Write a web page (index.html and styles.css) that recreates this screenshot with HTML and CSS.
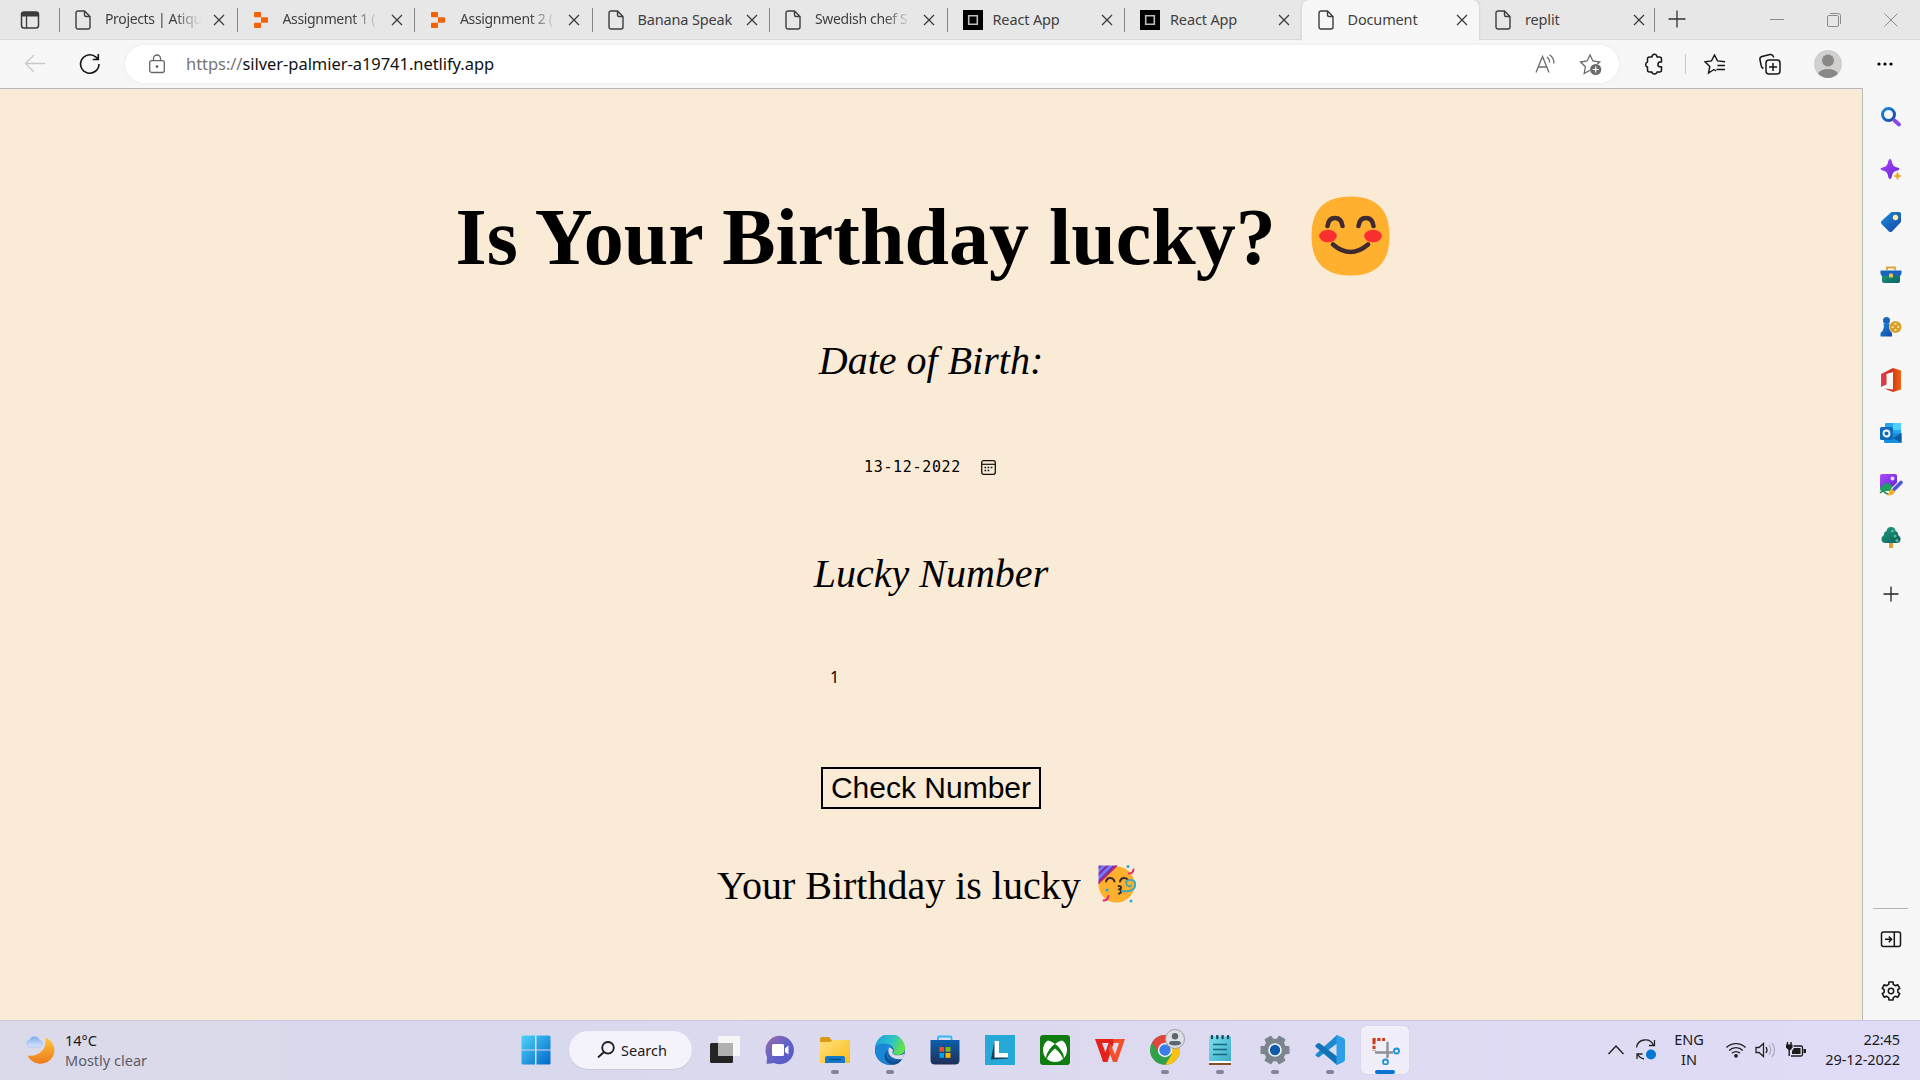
FILE: index.html
```html
<!DOCTYPE html>
<html lang="en">
<head>
<meta charset="utf-8">
<title>Document</title>
<link rel="stylesheet" href="styles.css">
</head>
<body>
<svg class="defs" width="0" height="0">
  <defs>
    <symbol id="doc" viewBox="0 0 16 20"><path d="M3 1h6.500L15 6.500V17a2 2 0 0 1-2 2H3a2 2 0 0 1-2-2V3a2 2 0 0 1 2-2zM9.500 1v4a1.500 1.500 0 0 0 1.500 1.500h4" fill="none" stroke="#3d3d3d" stroke-width="1.400"/></symbol>
    <symbol id="x" viewBox="0 0 12 12"><path d="M1 1l10 10M11 1L1 11" stroke="#3b3b3b" stroke-width="1.300" fill="none"/></symbol>
    <symbol id="replit" viewBox="0 0 14 16"><path d="M1 0h5q1 0 1 1v4.300H1q-1 0-1-1V1q0-1 1-1zM7 5.300h6q1 0 1 1v3.400q0 1-1 1H7zM1 10.700h6V15q0 1-1 1H1q-1 0-1-1v-3.300q0-1 1-1z" fill="#f26207"/></symbol>
    <symbol id="react" viewBox="0 0 20 20"><path d="M0 0h20v20H0z"/><path d="M5.700 5.700h8.600v8.600H5.700z" fill="none" stroke="#bdbdbd" stroke-width="1.600"/></symbol>
    <symbol id="gear" viewBox="0 0 24 24"><path d="M9.750 2.260h4.500l.22 2.550 2.520 1.450 2.320-1.080 2.250 3.900-2.100 1.470v2.900l2.100 1.470-2.250 3.900-2.320-1.080-2.520 1.450-.22 2.550h-4.500l-.22-2.550-2.520-1.450-2.320 1.080-2.250-3.900 2.100-1.470v-2.900l-2.100-1.470 2.250-3.900 2.320 1.080 2.520-1.450z" stroke-linejoin="round"/></symbol>
    <linearGradient id="gWin" x1="0" y1="0" x2="1" y2="1"><stop stop-color="#4fd3fb"/><stop offset="1" stop-color="#0067c8"/></linearGradient>
    <linearGradient id="gMoon" x1="0" y1="0" x2="0" y2="1"><stop stop-color="#ffc63a"/><stop offset="1" stop-color="#ee7a1c"/></linearGradient>
    <linearGradient id="gCloud" x1="0" y1="0" x2="0" y2="1"><stop stop-color="#7fa9ee"/><stop offset="1" stop-color="#d8e8fc"/></linearGradient>
    <linearGradient id="gBlue" x1="0" y1="0" x2="1" y2="1"><stop stop-color="#1b8bd8"/><stop offset="1" stop-color="#1746a8"/></linearGradient>
    <linearGradient id="gPurple" x1="0" y1="0" x2="1" y2="1"><stop stop-color="#b14cff"/><stop offset="1" stop-color="#5b1fd1"/></linearGradient>
    <linearGradient id="gChat" x1="0" y1="0" x2="1" y2="1"><stop stop-color="#a06aa8"/><stop offset=".5" stop-color="#6264c7"/><stop offset="1" stop-color="#5456c9"/></linearGradient>
    <linearGradient id="gFolder" x1="0" y1="0" x2="1" y2="1"><stop stop-color="#ffe07a"/><stop offset="1" stop-color="#fbbc1c"/></linearGradient>
    <linearGradient id="gEdge" x1="0" y1="0" x2="1" y2=".3"><stop stop-color="#1c9fe0"/><stop offset=".6" stop-color="#2cc3c9"/><stop offset="1" stop-color="#62e04d"/></linearGradient>
    <linearGradient id="gStore" x1="0" y1="0" x2="0" y2="1"><stop stop-color="#0c5fae"/><stop offset="1" stop-color="#1e2f55"/></linearGradient>
    <linearGradient id="gOffice" x1="0" y1="0" x2="1" y2="0"><stop stop-color="#e0405a"/><stop offset=".5" stop-color="#d0301c"/><stop offset="1" stop-color="#f0620f"/></linearGradient>
    <linearGradient id="gGreen" x1="0" y1="0" x2="1" y2="1"><stop stop-color="#1f9e78"/><stop offset="1" stop-color="#0d5e63"/></linearGradient>
    <linearGradient id="gPad" x1="0" y1="0" x2="1" y2="1"><stop stop-color="#7fe0ee"/><stop offset="1" stop-color="#35a9c4"/></linearGradient>
    <linearGradient id="gHat" x1="0" y1="0" x2="3.500" y2="3.500" gradientUnits="userSpaceOnUse" spreadMethod="repeat"><stop stop-color="#6d7bff"/><stop offset=".5" stop-color="#6d7bff"/><stop offset=".5" stop-color="#8b2f9e"/><stop offset="1" stop-color="#8b2f9e"/></linearGradient>
  </defs>
</svg>

<header class="tabstrip">
  <span class="tab-actions"><svg width="20" height="18" viewBox="0 0 20 18"><rect x="1.500" y="1" width="17" height="16" rx="2.500" fill="none" stroke="#3b3b3b" stroke-width="1.500"/><path d="M2 1h16v4.500H2z" fill="#3b3b3b"/><path d="M6.500 5v12" stroke="#3b3b3b" stroke-width="1.300"/></svg></span>
  <div class="tab"><svg class="fav doc"><use href="#doc"/></svg><span class="label">Projects | Atiqu</span><svg class="close"><use href="#x"/></svg></div>
  <div class="tab"><svg class="fav orange"><use href="#replit"/></svg><span class="label">Assignment 1 (</span><svg class="close"><use href="#x"/></svg></div>
  <div class="tab"><svg class="fav orange"><use href="#replit"/></svg><span class="label">Assignment 2 (</span><svg class="close"><use href="#x"/></svg></div>
  <div class="tab"><svg class="fav doc"><use href="#doc"/></svg><span class="label full">Banana Speak</span><svg class="close"><use href="#x"/></svg></div>
  <div class="tab"><svg class="fav doc"><use href="#doc"/></svg><span class="label">Swedish chef S</span><svg class="close"><use href="#x"/></svg></div>
  <div class="tab"><svg class="fav react"><use href="#react"/></svg><span class="label full">React App</span><svg class="close"><use href="#x"/></svg></div>
  <div class="tab"><svg class="fav react"><use href="#react"/></svg><span class="label full">React App</span><svg class="close"><use href="#x"/></svg></div>
  <div class="tab active"><svg class="fav doc"><use href="#doc"/></svg><span class="label full">Document</span><svg class="close"><use href="#x"/></svg></div>
  <div class="tab last"><svg class="fav doc"><use href="#doc"/></svg><span class="label full">replit</span><svg class="close"><use href="#x"/></svg></div>
  <span class="new-tab"><svg width="18" height="18" viewBox="0 0 18 18"><path d="M9 .5v17M.5 9h17" stroke="#333" stroke-width="1.300"/></svg></span>
  <div class="window-buttons">
    <svg width="14" height="14" viewBox="0 0 14 14"><path d="M0 6.500h14" stroke="#8c8c8c"/></svg>
    <svg width="14" height="14" viewBox="0 0 14 14" fill="none" stroke="#8c8c8c"><rect x=".5" y="2.500" width="11" height="11" rx="1.500"/><path d="M3 .5h8.500a2 2 0 0 1 2 2V11"/></svg>
    <svg width="14" height="14" viewBox="0 0 14 14"><path d="M.5.5l13 13M13.500.5l-13 13" stroke="#8c8c8c"/></svg>
  </div>
</header>

<div class="toolbar">
  <span class="slot"><svg width="22" height="20" viewBox="0 0 22 20" fill="none" stroke="#c9c9c9" stroke-width="1.300"><path d="M21 9.500H1.500M10 1L1.500 9.500 10 18"/></svg></span>
  <span class="slot"><svg width="22" height="22" viewBox="0 0 22 22" fill="none" stroke="#161616" stroke-width="1.600"><path d="M20 11a9.200 9.200 0 1 1-3-6.800l2 2M19.300 1v5.500h-5.500"/></svg></span>
  <div class="address">
    <svg width="16" height="20" viewBox="0 0 16 20" fill="none" stroke="#666" stroke-width="1.300"><rect x=".7" y="6.700" width="14.600" height="11.800" rx="2"/><path d="M4.500 6.500V4.500a3.500 3.500 0 0 1 7 0v2"/><circle cx="8" cy="12.600" r=".8" fill="#666"/></svg>
    <span class="url"><span class="scheme">https://</span>silver-palmier-a19741.netlify.app</span>
    <svg class="read" width="22" height="20" viewBox="0 0 22 20" fill="none" stroke="#6b6b6b" stroke-width="1.300"><path d="M1 18.500L7.500 2.500 14 18.500M3.300 13h8.400M12 3c1.800 1.300 2.600 3 2.600 5.500M14.500.8c3.200 2.200 4.800 5 4.300 8.700"/></svg>
    <svg width="23" height="23" viewBox="0 0 23 23"><path d="M11 17.200l-5.800 3.300 1.200-6.700L1.500 9l6.600-1L11 2l2.900 6 6.800 1-2.500 2.300" fill="none" stroke="#6b6b6b" stroke-width="1.300"/><circle cx="16.700" cy="16.500" r="5.600" fill="#6b6b6b"/><path d="M16.700 13.500v6M13.700 16.500h6" stroke="#fff" stroke-width="1.200"/></svg>
  </div>
  <span class="slot"></span>
  <span class="slot"><svg width="20" height="22" viewBox="0 0 20 22" fill="none" stroke="#161616" stroke-width="1.500" stroke-linejoin="round"><path d="M5.500 4H8a2.500 2.800 0 0 1 5 0h2.500q2 0 2 2v3H16a2 2.400 0 0 0 0 4.800h1.500V17q0 2-2 2H13a2.500 2 0 0 1-5 0H5.500q-2 0-2-2v-3a2.500 2.600 0 0 1 0-5V6q0-2 2-2z"/></svg></span>
  <span class="slot"><i class="divider"></i></span>
  <span class="slot"><svg width="22" height="21" viewBox="0 0 22 21" fill="none" stroke="#161616" stroke-width="1.400"><path d="M10 15.500l-5.500 3.500 1.300-6.500L1 7.800l6.500-.9L10.500 1l3 5.900 7.500.9M13.500 11.500h7.500M12.500 15.500H21M10 15.500l2 1.500"/></svg></span>
  <span class="slot"><svg width="22" height="22" viewBox="0 0 22 22" fill="none" stroke="#161616" stroke-width="1.500"><rect x="7" y="7" width="14" height="14" rx="3"/><path d="M14 10v8M10 14h8M4.500 15.500Q2.800 15 2.300 13L.9 6.500Q.5 4 3 3.400L11 1.500q2.500-.5 3.400 2l.3 1"/></svg></span>
  <span class="slot"><svg width="28" height="28" viewBox="0 0 28 28"><circle cx="14" cy="14" r="14" fill="#d2d0ce"/><circle cx="14" cy="10.500" r="6" fill="#8a8886"/><path d="M4 23.800a10.500 7 0 0 1 20 0A14 14 0 0 1 4 23.800z" fill="#8a8886"/></svg></span>
  <span class="slot"><svg width="18" height="6" viewBox="0 0 18 6"><circle cx="3" cy="3" r="1.600"/><circle cx="9" cy="3" r="1.600"/><circle cx="15" cy="3" r="1.600"/></svg></span>
</div>

<div class="browser-body">
  <main class="page">
    <h1 class="title"><span>Is Your Birthday lucky?</span>
      <svg width="80" height="80" viewBox="0 0 80 80"><path d="M39.500.5C66 .5 78.500 14 78.500 40S66 79.500 39.500 79.500.5 66 .5 40 13 .5 39.500.5z" fill="#ffb02e"/><ellipse cx="17" cy="40" rx="8.800" ry="6.300" fill="#f92f30"/><ellipse cx="62" cy="40" rx="8.800" ry="6.300" fill="#f92f30"/><path d="M16.500 30q1-8 7.500-8t7.500 8M47.500 30q1-8 7.500-8t7.500 8M22 48.500q17.500 15 35 0" fill="none" stroke="#402a32" stroke-width="4.500" stroke-linecap="round"/></svg>
    </h1>
    <p class="caption birth">Date of Birth:</p>
    <div class="date-field"><span>13-12-2022</span><svg width="15" height="15" viewBox="0 0 15 15" fill="none" stroke="#111"><rect x=".7" y=".7" width="13.600" height="13.600" rx="2" stroke-width="1.300"/><path d="M1 4.300h13" stroke-width="1.200"/><path d="M3.500 7.500h8M3.500 10.500h5.500" stroke-width="1.500" stroke-dasharray="1.700 1.400"/></svg></div>
    <p class="caption number">Lucky Number</p>
    <div class="number-field">1</div>
    <button class="check">Check Number</button>
    <p class="result"><span>Your Birthday is lucky</span>
      <svg width="40" height="40" viewBox="0 0 40 40"><circle cx="19.500" cy="20.500" r="18" fill="#ffb02e"/><path d="M2 1.500h18L1.500 19.500V2z" fill="url(#gHat)"/><path d="M20 1.500L1.500 19.500" stroke="#b8257a" stroke-width="1.500"/><path d="M9 17.500q1-4 4.500-3.500t4 3.500M23 17.500q1-4 4.500-3.500 2 0 3 1.500M21.500 22q3 0 2.500 2.300l-1.500 1q2 1 1.500 3l-2 1.500" fill="none" stroke="#402a32" stroke-width="2" stroke-linecap="round"/><path d="M24 27q13 1.500 14-5t-5-6-3 5q3 3 4.500 0" fill="none" stroke="#3faab8" stroke-width="2"/><path d="M32 9.500q4 0 4.500-4M6.500 36.500q4 0 5-4.500" fill="none" stroke="#f3216d" stroke-width="2" stroke-linecap="round"/><g fill="#26a6dc"><circle cx="31" cy="2.500" r="1.500"/><circle cx="34" cy="37" r="1.500"/><circle cx="10" cy="26" r="1.500"/></g></svg>
    </p>
  </main>
  <aside class="sidebar">
    <div class="apps">
      <svg viewBox="0 0 22 22"><circle cx="8.500" cy="8.500" r="6" fill="none" stroke="url(#gBlue)" stroke-width="3"/><path d="M14.500 14.500l4.500 4" stroke="#8a46e8" stroke-width="3.800" stroke-linecap="round"/></svg>
      <svg viewBox="0 0 22 22"><path d="M10 0q1.500 0 2 3.500 1 4 4.500 4.800 3 .7 3 1.700t-3 1.700q-3.500.8-4.500 4.800-.5 3.500-2 3.500t-2-3.500q-1-4-4.500-4.800Q.5 11 .5 10t3-1.700Q7 7.500 8 3.500 8.500 0 10 0z" fill="url(#gPurple)"/><path d="M17.500 12.500l1.400 3.300 3.100 1.200-3.100 1.300-1.400 3.200-1.400-3.200L13 17l3.100-1.200z" fill="#e5ab25"/></svg>
      <svg viewBox="0 0 22 22"><path d="M11.500 1H19q2 0 2 2v8l-9 9.500q-1.500 1-3 0L1.500 13q-1.200-1.500 0-3z" fill="url(#gBlue)"/><circle cx="15.500" cy="6.500" r="2.700" fill="#fff0a0"/></svg>
      <svg viewBox="0 0 22 22"><path d="M7 6V3.500h8V6" fill="none" stroke="#d9a63a" stroke-width="1.800"/><path d="M2 9h18v8q0 2-2 2H4q-2 0-2-2z" fill="url(#gGreen)"/><path d="M.5 6.500h21V9q0 3-3 3h-15q-3 0-3-3z" fill="#1763bd"/><rect x="9" y="9.500" width="4" height="4" rx="1" fill="#f3c64a"/></svg>
      <svg viewBox="0 0 22 22"><circle cx="6.500" cy="4.500" r="3.500" fill="#1b66b8"/><path d="M3.500 7.500h6v2H9q0 5 3 7.500v3.500H.5V17q3-2 3.500-7.500h-.5z" fill="url(#gBlue)"/><circle cx="15.500" cy="11" r="6" fill="#dba02c"/><g fill="#fff0a8"><circle cx="15.500" cy="8" r="1"/><circle cx="12.700" cy="11" r="1"/><circle cx="18.300" cy="11" r="1"/><circle cx="15.500" cy="14" r="1"/></g></svg>
      <svg class="tall" viewBox="0 0 22 24"><path d="M13 0l8 2.500v19L13 24 4 20.500l9 1V4L6.500 6v10.500L1 19V6z" fill="url(#gOffice)"/></svg>
      <svg viewBox="0 0 22 22"><path d="M6 1h14q1 0 1 1v9H5V2q0-1 1-1z" fill="#28a8ea"/><path d="M13 1h8v7h-8z" fill="#50d0ff"/><path d="M4 11h17.500v9q0 1-1 1H5q-1 0-1-1z" fill="#1490df"/><path d="M21.500 11L13 16l8.500 5z" fill="#0a5ea8"/><rect x="0" y="5" width="13" height="13" rx="1.500" fill="#0f6cbd"/><circle cx="6.500" cy="11.500" r="3" fill="none" stroke="#fff" stroke-width="1.800"/></svg>
      <svg class="wide" viewBox="0 0 24 24"><rect x="1" y="1" width="17" height="16" rx="2" fill="url(#gPurple)"/><circle cx="13.500" cy="5.500" r="2" fill="#e9d7ff"/><path d="M1 15l4-4q3-2 6 0l4 4q0 3-2 3H3q-2 0-2-2z" fill="#20a060"/><path d="M1 20q3-3 4.500-1t4 2" stroke="#20855a" stroke-width="1.600" fill="none"/><path d="M22 9.500l-7 7" stroke="#f7f7f7" stroke-width="5.500" stroke-linecap="round"/><path d="M22 9.500l-7 7" stroke="#4d55d9" stroke-width="3.600" stroke-linecap="round"/><path d="M13 16l3 3q-2 4-8 3.500 2.500-2 2.500-4.500 1-2 2.500-2z" fill="#f0ae23"/></svg>
      <svg viewBox="0 0 22 22"><path d="M9 15h4v6H9z" fill="#d8a13a"/><path d="M11 0q4 0 4.500 4 3 1 2.500 4 3 2 2.500 5t-4 3H5.500q-3.500 0-4-3T4 8q-.5-3 2.500-4Q7 0 11 0z" fill="url(#gGreen)"/><g fill="#55bf88"><circle cx="12.500" cy="4" r="1.500"/><circle cx="15" cy="9" r="1.500"/><circle cx="17" cy="13.500" r="1.500"/></g></svg>
      <svg class="add" viewBox="0 0 22 22"><path d="M11 3.500v15M3.500 11h15" stroke="#222" stroke-width="1.300"/></svg>
    </div>
    <div class="tools">
      <svg viewBox="0 0 22 22" fill="none" stroke="#161616" stroke-width="1.500"><rect x="1.500" y="4" width="19" height="14.500" rx="2"/><path d="M14.300 4v14.500M5 11.300h6.500M8.800 8.500l2.800 2.800-2.800 2.800"/></svg>
      <svg viewBox="0 0 22 22"><use href="#gear" fill="none" stroke="#161616" stroke-width="1.700"/><circle cx="11" cy="11" r="2.700" fill="none" stroke="#161616" stroke-width="1.500"/></svg>
    </div>
  </aside>
</div>

<footer class="taskbar">
  <div class="weather">
    <svg width="30" height="30" viewBox="0 0 30 30"><path d="M20 2.500a14 13.500 0 1 1-17.500 18Q11 22 17 16q5-6 3-13.500z" fill="url(#gMoon)"/><path d="M4.500 12a4 4 0 0 1 0-7.500 5.500 5.500 0 0 1 10 .5 3.800 3.800 0 0 1 1 7z" fill="url(#gCloud)" stroke="#9fbdf0" stroke-width=".6"/></svg>
    <div class="weather-text"><span>14°C</span><span class="muted">Mostly clear</span></div>
  </div>
  <div class="dock">
    <span class="app"><svg viewBox="0 0 30 30"><path d="M.5 2q0-1.500 1.500-1.500h12v14H.5zM15.500.5H28q1.500 0 1.500 1.500v12.500h-14zM.5 15.500h13.500v14H2Q.5 29.500.5 28zM15.500 15.500h14V28q0 1.500-1.500 1.500H15.500z" fill="url(#gWin)"/></svg></span>
    <div class="search"><svg width="18" height="17" viewBox="0 0 18 17" fill="none" stroke="#1b1b1b" stroke-width="1.800"><circle cx="11" cy="6.800" r="5.800"/><path d="M7 11L1 16.500"/></svg><span>Search</span></div>
    <span class="app"><svg viewBox="0 0 30 30"><rect y="8" width="23" height="20" rx="1.500" fill="#252525"/><rect x="8" y="1" width="22" height="20" rx="1.500" fill="#f8f8f8" opacity=".9"/><path d="M8 8h15v13H8z" fill="#b0b0b0"/></svg></span>
    <span class="app"><svg viewBox="0 0 30 30"><path d="M15 .8A14.200 14.200 0 1 1 9 28q-4 1-7.500.8Q2 26 2 22 .5 19 .5 15A14.300 14.300 0 0 1 15 .8z" fill="url(#gChat)"/><rect x="7" y="9" width="12" height="12" rx="1.500" fill="#fff"/><path d="M20 13.500l3.500-3v9L20 17z" fill="#fff"/></svg></span>
    <span class="app run"><svg viewBox="0 0 30 30"><path d="M0 3.500Q0 2 1.500 2H9l3.500 4-2 2H0z" fill="#d99a18"/><path d="M0 7h10.500l2-2H30v23H0z" fill="url(#gFolder)"/><path d="M5 28v-5q0-2 2-2h16q2 0 2 2v5z" fill="#1379c8"/><path d="M9 24.500h12" stroke="#0b4d91" stroke-width="1.500"/></svg></span>
    <span class="app run"><svg viewBox="0 0 30 30"><circle cx="15" cy="15" r="15" fill="#1161ad"/><path d="M0 14A15 15 0 0 1 30 13.500q0 6.500-7 6.500-5 0-5.500-2.500 2-1 .8-4Q16 9 9.500 9.500 2 10 0 14z" fill="url(#gEdge)"/><path d="M0 15q0-6.500 8-6.500t10 4q-6 0-6 6.500 1 7 9 8.500-4 3-9 2.200Q0 26 0 15z" fill="#1a86d6"/><path d="M12.500 15q-3.500 7 3 10.500 6 2.500 12-2.300-3 6.600-10 6.600-8-2-8-9 .5-4 3-5.800z" fill="#0f4d92"/><path d="M14 12.500q3.500.5 4 3 0 1-.8 2 .8 3 6 2.800 3.200 0 6-1.600-.8 3.600-1.500 5-6 1.500-11-1.500-5-4-2.700-9.700z" fill="#dbd9ee"/></svg></span>
    <span class="app"><svg viewBox="0 0 30 30"><path d="M8 8V2.500q0-1 1-1h11.500q1 0 1 1V8" fill="none" stroke="#35b5f2" stroke-width="1.800"/><path d="M.5 5h29v20q0 4.500-4.500 4.500H5Q.5 29.500.5 25z" fill="url(#gStore)"/><path d="M9.500 12H14v4.700H9.500z" fill="#f25022"/><path d="M15.500 12h5v4.700h-5z" fill="#7fba00"/><path d="M9.500 18H14v4.800H9.500z" fill="#00a4ef"/><path d="M15.500 18h5v4.800h-5z" fill="#ffb900"/></svg></span>
    <span class="app"><svg viewBox="0 0 30 30"><path d="M0 0h30v30H0z" fill="#27a9d8"/><path d="M9.500 6L6 24.500 11 22z" fill="#123a5c"/><path d="M6 24.500l17-1V22H9z" fill="#123a5c"/><path d="M9.500 6h4.500v12h9v4.500H9.500z" fill="#fff"/></svg></span>
    <span class="app"><svg viewBox="0 0 30 30"><rect width="30" height="30" rx="3" fill="#107c10"/><circle cx="15" cy="15" r="12" fill="#fff"/><path d="M7 5.500Q10 5 15 9q5-4 8-3.500Q19 2 15 2T7 5.500zM15 9q-3 1.500-6.500 7Q5 21.500 6.500 25q2-6.500 8.500-11.500 6.500 5 8.500 11.500Q25 21.500 21.500 16 18 10.500 15 9z" fill="#107c10"/></svg></span>
    <span class="app"><svg viewBox="0 0 30 30"><path d="M0 4h17l-2 4H7l4.500 12-1.500 6.500H8z" fill="#e3231b"/><path d="M5 8l4.500 12L15 4h5l-7.500 23H8z" fill="#e3231b"/><path d="M18 4h12l-8 23h-4L13.500 15l2.200-6L20 19.500 24 8h-5z" fill="#f5502c"/></svg></span>
    <span class="app run"><svg viewBox="0 0 30 30"><circle cx="15" cy="15" r="15" fill="#31a04b"/><path d="M15 0A15 15 0 0 1 28 7.500H15L9 18 2 7.500A15 15 0 0 1 15 0z" fill="#e0443a"/><path d="M15 7.500h13A15 15 0 0 1 15 30l7-11z" fill="#fbc116"/><circle cx="15" cy="15" r="7.200" fill="#f4f4f4"/><circle cx="15" cy="15" r="5.700" fill="#3b7de9"/></svg><svg class="badge" viewBox="0 0 20 20"><circle cx="10" cy="10" r="9.500" fill="#dcdfe3" stroke="#9a9fa5"/><circle cx="10" cy="7.200" r="3.200" fill="#5a6670"/><path d="M4 15q0-3 3-3h6q3 0 3 3-6 3-12 0z" fill="#5a6670"/></svg></span>
    <span class="app run"><svg viewBox="0 0 30 30"><path d="M4 1.500h22v27H4z" fill="url(#gPad)"/><path d="M4 26h22v2H4z" fill="#fff"/><path d="M4 28h22v2H4z" fill="#855028"/><path d="M8 9.500h14M8 14.500h14M8 19.500h14" stroke="#14687f" stroke-width="1.600"/><path d="M7 1v2M12.300 1v2M17.600 1v2M23 1v2" stroke="#1c4e63" stroke-width="2.400" stroke-linecap="round"/></svg></span>
    <span class="app run"><svg viewBox="0 0 30 30"><g transform="rotate(30 15 15)"><use href="#gear" x="-2" y="-2" width="34" height="34" fill="#7b858d" stroke="#7b858d" stroke-width="1"/></g><circle cx="15" cy="15" r="6" fill="#0e59a8" stroke="#eef3f8" stroke-width="1.700"/></svg></span>
    <span class="app run"><svg viewBox="0 0 30 30"><path d="M22 0L2.500 17.500Q-.5 20 1 21l2.500 1.500L24 7z" fill="#1d8ad0"/><path d="M2.500 8.500L.8 10q-1 1 0 2L22 30l2-7L5 8.500q-1-.8-2.500 0z" fill="#1272b8"/><path d="M22 0l6.500 3q1.500.8 1.500 2.500v19q0 1.700-1.500 2.500L22 30q-1.500 0-.5-2V2q-1-2 .5-2z" fill="#2c9fe6"/></svg></span>
    <span class="app run current"><svg viewBox="0 0 30 30"><path d="M2.500 4.500H15M4 6v10" fill="none" stroke="#d23c14" stroke-width="3" stroke-dasharray="3.200 1.600"/><path d="M17.500 7v16M5 17.500h18" stroke="#8c9196" stroke-width="2.400"/><circle cx="26.500" cy="16" r="2.500" fill="none" stroke="#1c93dc" stroke-width="1.800"/><circle cx="15.500" cy="27" r="2.500" fill="none" stroke="#1c93dc" stroke-width="1.800"/></svg></span>
  </div>
  <div class="tray">
    <svg width="16" height="10" viewBox="0 0 16 10" fill="none" stroke="#222" stroke-width="1.400"><path d="M.5 9L8 1l7.500 8"/></svg>
    <svg class="sync" width="20" height="21" viewBox="0 0 20 21"><path d="M.5 8.500A9 9 0 0 1 17.500 6M18.500 1v5.500H13M8 20q-4.500-1-6.500-5M1 20v-5h5.500" fill="none" stroke="#222" stroke-width="1.300"/><circle cx="15" cy="15.500" r="5" fill="#0078d4"/></svg>
    <span class="lang">ENG<br>IN</span>
    <svg class="wifi" width="20" height="16" viewBox="0 0 20 16" fill="none" stroke="#222" stroke-width="1.400"><path d="M.5 5.500a13.500 13.500 0 0 1 19 0M3.200 8.500a9.500 9.500 0 0 1 13.600 0M6 11.300a5.600 5.600 0 0 1 8 0"/><circle cx="10" cy="13.800" r="1.200" fill="#222"/></svg>
    <svg class="volume" width="21" height="16" viewBox="0 0 21 16" fill="none" stroke="#222" stroke-width="1.300"><path d="M1 5.500h3L8.500 1.500v13L4 10.500H1zM11 5q2 3 0 6"/><path d="M14 3q3.500 5 0 10M17 1q5 7 0 14" stroke="#aeadc0"/></svg>
    <svg class="battery" width="20" height="16" viewBox="0 0 20 16"><path d="M1.500 0v3M5 0v3M3.200 7v7" fill="none" stroke="#1b1b1b" stroke-width="1.400"/><path d="M0 2.500h6.500v3L4.500 8h-2L0 5.500z" fill="#1b1b1b"/><path d="M7.500 4H15q1.500 0 1.500 1.500v7Q16.500 14 15 14H5" fill="none" stroke="#1b1b1b" stroke-width="1.300"/><path d="M8 6h6.500v6H6V9zM17.500 7H20v4h-2.500z" fill="#1b1b1b"/></svg>
    <span class="clock">22:45<br>29-12-2022</span>
  </div>
</footer>
</body>
</html>
```
FILE: styles.css
```css
* { box-sizing: border-box; }
body {
  margin: 0;
  width: 1920px;
  height: 1080px;
  overflow: hidden;
  display: flex;
  flex-direction: column;
  font-family: "Noto Sans", "Open Sans", sans-serif;
  color: #111;
}
svg { display: block; flex: none; }
p, h1 { margin: 0; }
.defs { position: absolute; }

/* Tab strip */
.tabstrip { display: flex; height: 40px; flex: none; background: #e7e7e7; border-bottom: 1px solid #d9d9d9; }
.tab-actions { width: 59px; padding: 11px 0 0 20px; }
.tab { display: flex; align-items: center; width: 177.5px; flex: none; padding-left: 16px; position: relative; font-size: 14.5px; color: #3f3f3f; }
.tab::before { content: ""; position: absolute; left: 0; top: 8px; width: 1px; height: 24px; background: #858585; }
.tab.active::before, .tab.last::before { display: none; }
.tab.last::after { content: ""; position: absolute; right: 2px; top: 8px; width: 1px; height: 24px; background: #858585; }
.tab.active { background: #f7f7f7; height: 41px; border-radius: 7px 7px 0 0; box-shadow: 0 0 3px #c4c4c4; clip-path: inset(-3px -3px 0 -3px); padding-bottom: 2px; }
.fav { width: 20px; height: 20px; margin-right: 10px; }
.fav.doc { width: 16px; margin-right: 14px; }
.fav.orange { width: 14px; height: 16px; margin: 0 15px 0 1px; }
.label { width: 96px; margin-top: -2px; white-space: nowrap; font-size: 14px; letter-spacing: -.35px; -webkit-mask-image: linear-gradient(90deg, #000 72%, transparent 100%); mask-image: linear-gradient(90deg, #000 72%, transparent 100%); }
.label.full { font-size: 14.5px; letter-spacing: -.15px; -webkit-mask-image: none; mask-image: none; }
.close { width: 12px; height: 12px; margin: 1px 0 0 12px; }
.new-tab { padding: 10px 0 0 11px; }
.window-buttons { display: flex; gap: 43px; margin: 13px 22px 0 auto; }

/* Toolbar */
.toolbar { display: grid; grid-template-columns: 70px 55px 1494px 10px 50px 12px 48px 62px 54px 60px; align-items: center; height: 48px; flex: none; background: #f7f7f7; }
.slot { display: flex; justify-content: center; }
.slot:nth-child(2) { padding-right: 15px; }
.divider { width: 1px; height: 20px; background: #c8c8c8; }
.address { display: flex; align-items: center; height: 38px; padding: 0 17px 0 24px; border-radius: 19px; background: #fff; box-shadow: 0 0 3px #e2e2e2; }
.url { margin: -1px 0 0 21px; font-size: 16.5px; letter-spacing: -.05px; white-space: nowrap; }
.scheme { color: #767676; }
.read { margin: 0 22px 0 auto; }

/* Page and sidebar */
.browser-body { display: flex; height: 932px; flex: none; background: #f7f7f7; }
.page { width: 1863px; border-top: 1px solid #b9b9b9; border-right: 1px solid #b9b9b9; background: #faebd7; display: flex; flex-direction: column; align-items: center; font-family: "Liberation Serif", serif; color: #000; }
.title { display: flex; gap: 39px; margin: 102px 2px 0 0; width: 949px; font-size: 80px; line-height: 92px; white-space: nowrap; }
.title span { width: 816px; }
.title svg { margin-top: 5px; }
.caption { font-size: 40px; line-height: 46px; font-style: italic; }
.birth { margin-top: 55px; }
.date-field { display: flex; align-items: center; gap: 20px; height: 20px; margin: 73px 2px 0 0; font: 15px/20px "DejaVu Sans Mono", monospace; letter-spacing: .67px; }
.number { margin-top: 74px; }
.number-field { width: 202px; height: 20px; margin-top: 70px; font: 16px/20px "Noto Sans", sans-serif; }
.check { height: 42px; width: 220px; margin: 80px 0 0; padding: 0; border: 2px solid #000; background: none; color: #000; font: 30px/36px "Liberation Sans", sans-serif; white-space: nowrap; }
.result { display: flex; gap: 16px; margin-top: 54px; width: 428px; font-size: 40px; line-height: 46px; white-space: nowrap; }
.result svg { margin-top: 1px; }
.sidebar { width: 57px; display: flex; flex-direction: column; justify-content: space-between; align-items: center; padding: 18px 2px 18px 0; }
.apps { display: flex; flex-direction: column; align-items: center; gap: 30.6px; }
.apps svg { width: 22px; height: 22px; }
.apps .tall { height: 24px; margin: -1px 0; }
.apps .wide { width: 24px; height: 24px; margin: -1px 0; }
.apps .add { margin-top: 4px; }
.tools { width: 35px; border-top: 1px solid #b5b5b5; display: flex; flex-direction: column; align-items: center; gap: 30px; padding-top: 19px; }
.tools svg { width: 22px; height: 22px; }

/* Taskbar */
.taskbar { display: flex; height: 60px; flex: none; background: linear-gradient(90deg, #dbdaea, #d9d9ed 30%, #dddaf0 60%, #e0dcf8); border-top: 1px solid #cfc6dd; font-size: 14.5px; color: #1b1b1b; }
.weather { display: flex; width: 508px; padding: 14px 0 0 25px; gap: 10px; }
.weather-text { display: flex; flex-direction: column; line-height: 20px; margin-top: -5px; }
.muted { color: #5c5c66; }
.dock { display: flex; align-items: center; height: 57px; }
.app { display: flex; justify-content: center; align-items: center; width: 55px; height: 48px; position: relative; }
.app > svg { width: 30px; height: 30px; }
.app > .badge { position: absolute; right: 7px; top: 3px; width: 20px; height: 20px; }
.run::after { content: ""; position: absolute; bottom: 0; width: 8px; height: 4px; border-radius: 2px; background: #85839a; }
.current { width: 48px; margin-left: 3.5px; border-radius: 5px; background: #efeef9; box-shadow: 0 0 1px #b9b6cc; }
.current::after { width: 20px; background: #0a74d0; }
.search { display: flex; align-items: center; gap: 6px; width: 123px; height: 38px; margin: 0 5px 0 6px; padding-left: 28px; border-radius: 19px; background: #f4f3fb; box-shadow: 0 1px 1px #c9c7da; }
.tray { display: flex; align-items: center; margin-left: auto; padding-right: 20px; height: 57px; line-height: 20px; }
.sync { margin-left: 12px; }
.lang { width: 30px; margin: -2px 0 0 18px; text-align: center; }
.wifi { margin-left: 22px; }
.volume { margin-left: 9px; }
.battery { margin-left: 10px; }
.clock { width: 80px; margin: -2px 0 0 14px; text-align: right; white-space: nowrap; letter-spacing: -.1px; }
```
